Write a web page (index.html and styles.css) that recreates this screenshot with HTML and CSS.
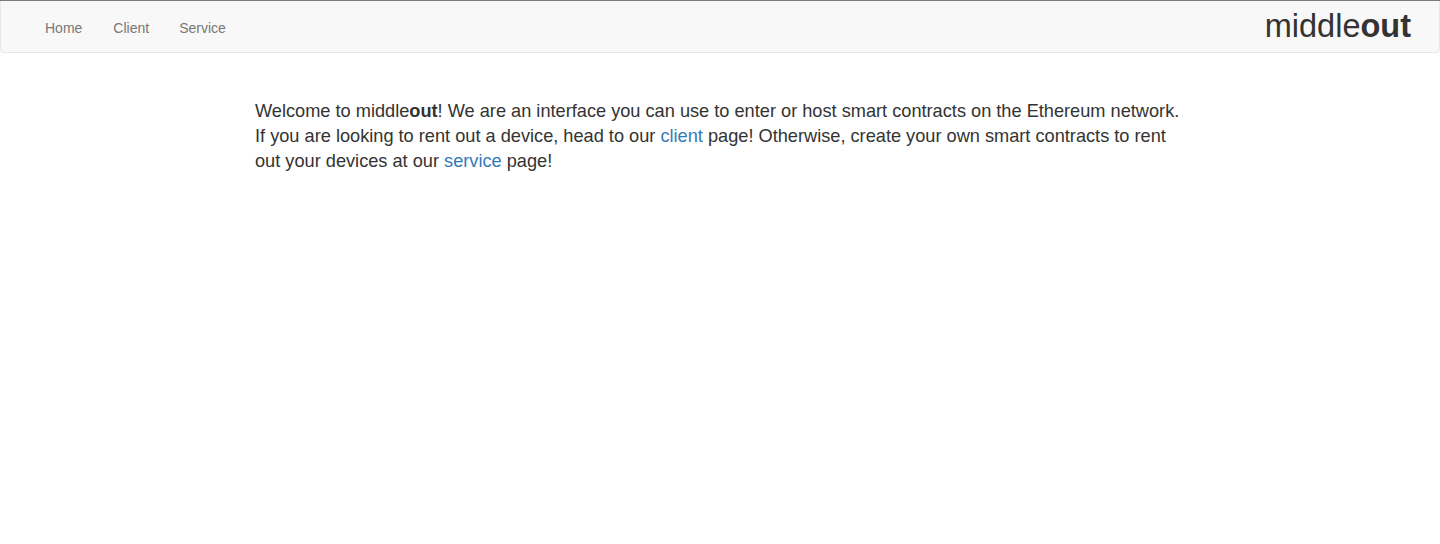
FILE: index.html
```html
<!DOCTYPE html>
<html>
<head>
<meta charset="utf-8">
<link rel="stylesheet" href="styles.css">
</head>
<body>
<div class="topline"></div>
<nav class="navbar">
  <ul class="nav">
    <li><a href="#">Home</a></li>
    <li><a href="#">Client</a></li>
    <li><a href="#">Service</a></li>
  </ul>
  <div class="brand">middle<b>out</b></div>
</nav>
<main class="content">
  <p>Welcome to middle<b>out</b>! We are an interface you can use to enter or host smart contracts on the Ethereum network. If you are looking to rent out a device, head to our <a href="#">client</a> page! Otherwise, create your own smart contracts to rent out your devices at our <a href="#">service</a> page!</p>
</main>
</body>
</html>
```
FILE: styles.css
```css
html, body {
  margin: 0;
  padding: 0;
  background: #fff;
  font-family: "Liberation Sans", Arial, Helvetica, sans-serif;
  color: #333;
}
.topline {
  height: 1px;
  background: #7a7a7a;
}
.navbar {
  display: flex;
  align-items: center;
  justify-content: space-between;
  height: 51px;
  background: #f8f8f8;
  border: 1px solid #e7e7e7;
  border-top: none;
  border-radius: 0 0 4px 4px;
  padding: 0 28px 0 29px;
}
.nav {
  display: flex;
  list-style: none;
  margin: 0;
  padding: 0;
}
.nav li:first-child a {
  padding-right: 16px;
}
.nav a {
  display: block;
  padding: 17px 15px 14px;
  font-size: 14px;
  line-height: 20px;
  color: #777;
  text-decoration: none;
}
.brand {
  font-size: 32.5px;
  color: #333;
  line-height: 50px;
  padding-bottom: 2px;
}
.brand b {
  font-weight: 700;
}
.content {
  width: 930px;
  margin: 46px auto 0;
}
.content p {
  margin: 0;
  font-size: 18.2px;
  line-height: 25px;
  color: #333;
}
.content a {
  color: #337ab7;
  text-decoration: none;
}
```
